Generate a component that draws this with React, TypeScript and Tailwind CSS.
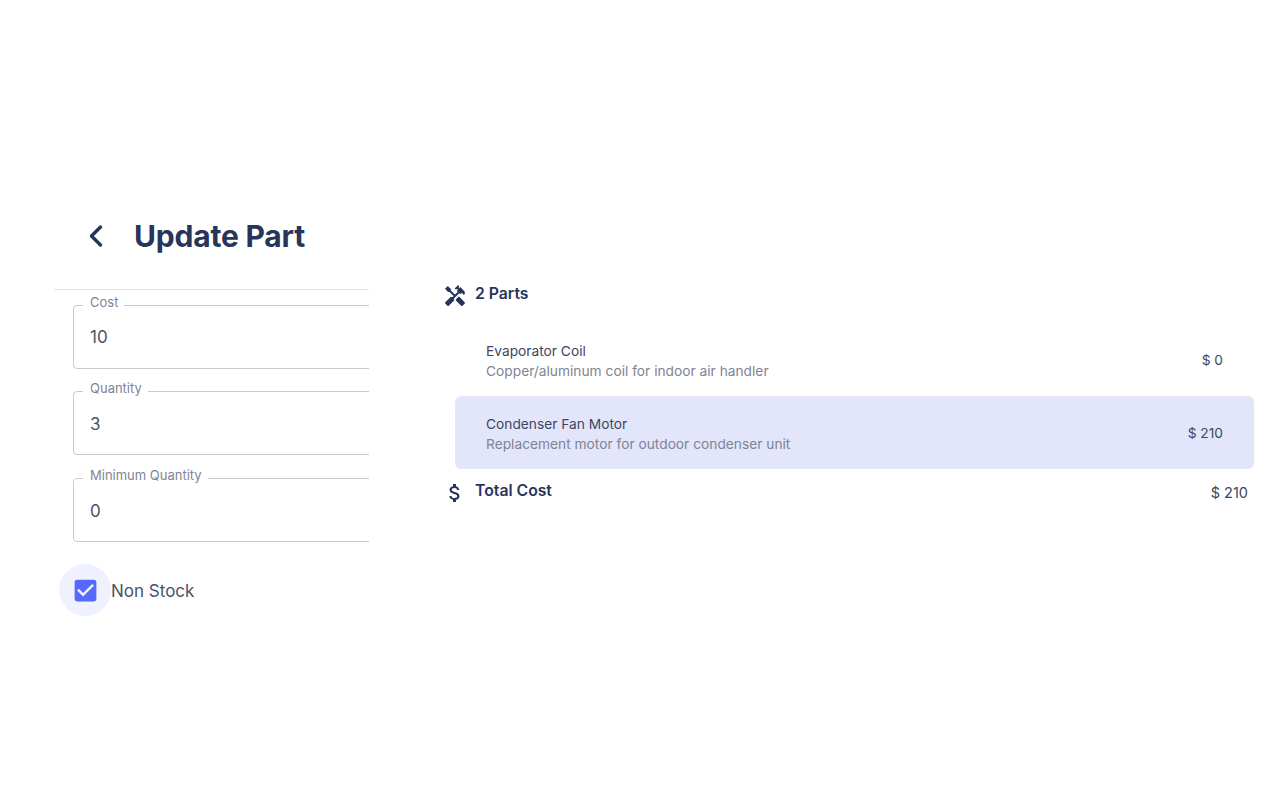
import { ChevronLeft } from "lucide-react";
import { MdAttachMoney, MdCheckBox, MdHandyman } from "react-icons/md";

const FIELDS = [
  { label: "Cost", value: "10", valueClass: "pt-[9px]" },
  { label: "Quantity", value: "3", valueClass: "pt-[10px]" },
  { label: "Minimum Quantity", value: "0", valueClass: "pt-[10px]" },
];

const PARTS = [
  { name: "Evaporator Coil", description: "Copper/aluminum coil for indoor air handler", price: "$ 0", selected: false },
  { name: "Condenser Fan Motor", description: "Replacement motor for outdoor condenser unit", price: "$ 210", selected: true },
];

export default function App() {
  return (
    <div className="flex h-[800px] w-[1280px] overflow-hidden bg-white font-['Inter',sans-serif] text-[#27355c]">
      {/* Form */}
      <div className="ml-[54px] mt-[212px] w-[315px] shrink-0 overflow-hidden">
        <div className="flex h-[78px] items-start border-b border-[#e6e7ea] pl-[24px]">
          <ChevronLeft size={36} strokeWidth={2.3} className="mt-[6px]" />
          <h1 className="ml-[20px] text-[30px] leading-[48px] font-bold tracking-[-0.2px]">Update Part</h1>
        </div>

        <div className="flex w-[400px] flex-col gap-[11px] pl-[19px] pt-[4px]">
          {FIELDS.map((field) => (
            <fieldset key={field.label} className="h-[75px] rounded-[4px] border border-[#c9cacd] px-[9px] last:mt-[1px]">
              <legend className="pb-[6px] pl-[7px] pr-[6px] text-[13px] leading-[16px] text-[#7f8494]">{field.label}</legend>
              <div className={`pl-[7px] text-[17px] leading-[24px] text-[#4a5268] ${field.valueClass}`}>{field.value}</div>
            </fieldset>
          ))}
        </div>

        <div className="mt-[22px] flex items-center pl-[5px]">
          <div className="flex h-[52px] w-[52px] items-center justify-center rounded-full bg-[#eff1ff]">
            <MdCheckBox size={29} className="text-[#5569ff]" />
          </div>
          <span className="pt-[3px] text-[17px] text-[#4a5268]">Non Stock</span>
        </div>
      </div>

      {/* Parts summary */}
      <div className="ml-[73px] mt-[282px] w-[812px] shrink-0">
        <div className="flex h-[24px] items-center">
          <MdHandyman size={24} className="ml-[1px] mt-[3px]" />
          <span className="ml-[8px] text-[15.75px] font-semibold">2 Parts</span>
        </div>

        <div className="ml-[13px] mt-[17px]">
          {PARTS.map((part) => (
            <div
              key={part.name}
              className={`flex h-[73px] items-center justify-between rounded-[6px] pl-[31px] pr-[31px] pt-[2px] ${
                part.selected ? "bg-[#e3e6fb]" : ""
              }`}
            >
              <div>
                <div className="text-[13.75px] leading-[20px] text-[#3d4660]">{part.name}</div>
                <div className="text-[13.75px] leading-[20px] text-[#7f8494]">{part.description}</div>
              </div>
              <span className="text-[13.75px] text-[#3d4660]">{part.price}</span>
            </div>
          ))}
        </div>

        <div className="mt-[9px] flex items-start">
          <MdAttachMoney size={24} className="ml-[1px] mt-[3px]" />
          <span className="ml-[8px] mt-[1px] text-[15.75px] leading-[24px] font-semibold">Total Cost</span>
          <span className="ml-auto mr-[6px] mt-[3px] text-[14.5px] leading-[24px] text-[#3d4660]">$ 210</span>
        </div>
      </div>
    </div>
  );
}
